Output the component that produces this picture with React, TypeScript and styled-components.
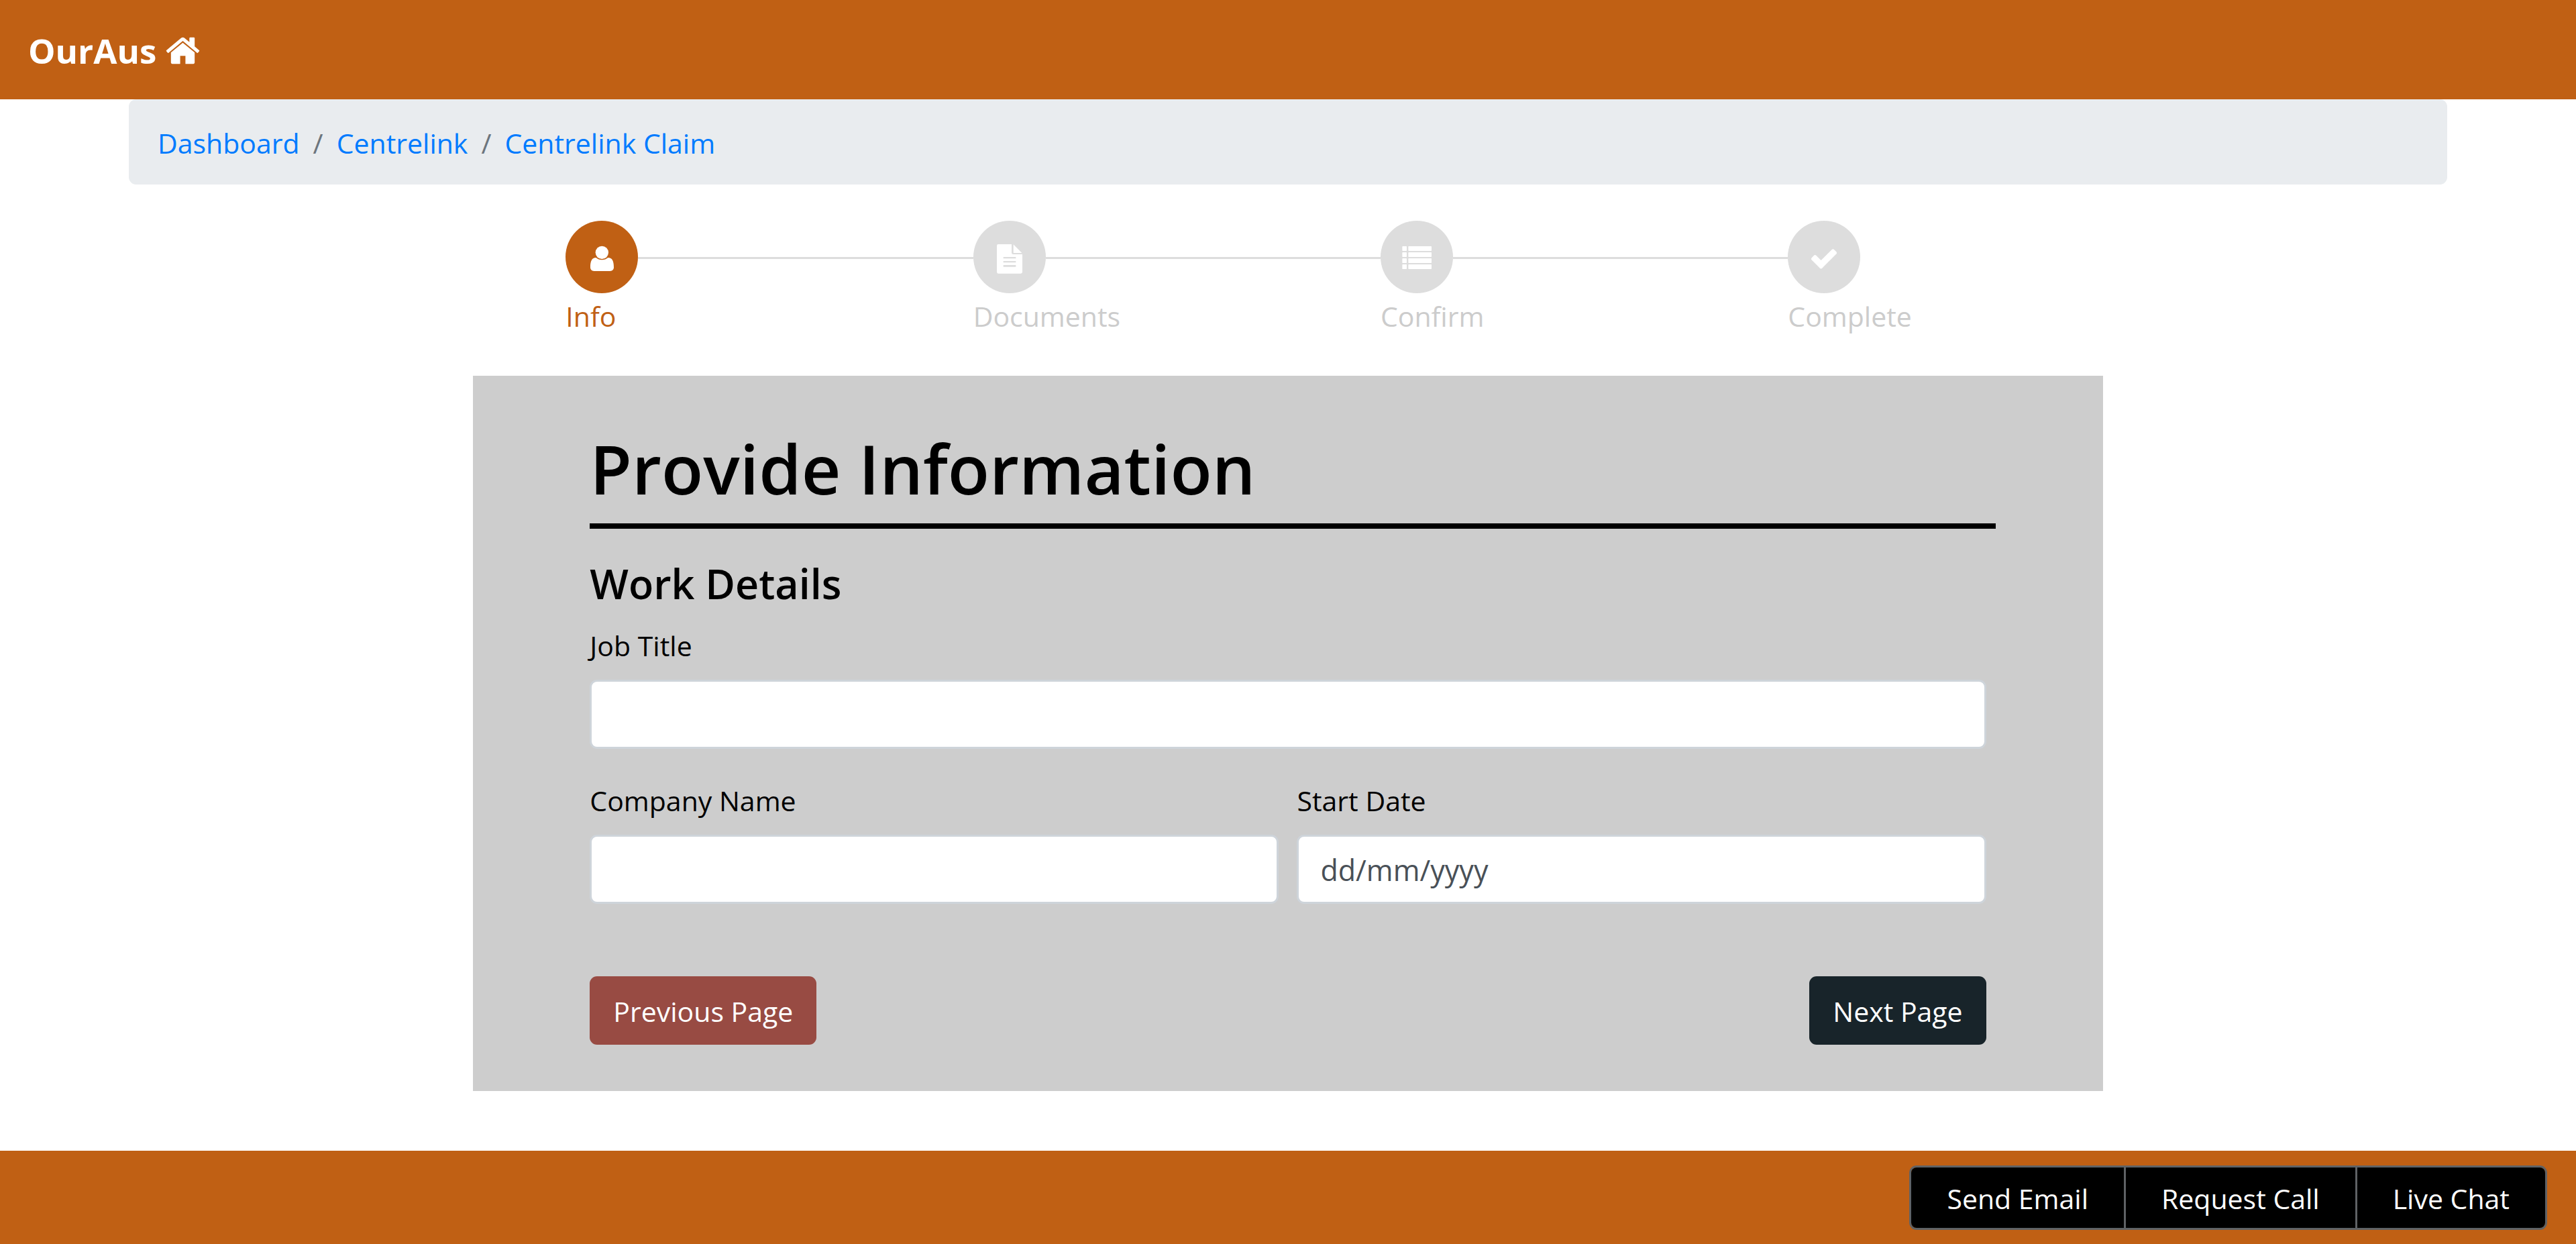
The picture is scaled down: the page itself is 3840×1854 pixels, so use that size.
import React from 'react';
import styled, { createGlobalStyle } from 'styled-components';

const orange = '#c06014';

const GlobalStyle = createGlobalStyle`
  * { box-sizing: border-box; }
  body {
    margin: 0;
    background: #fff;
    color: #000;
    font-family: 'Open Sans', 'Noto Sans', sans-serif;
    font-size: 41px;
    line-height: 64px;
  }
`;

const Page = styled.div`
  display: flex;
  flex-direction: column;
  min-height: 100vh;
`;

const Header = styled.header`
  display: flex;
  align-items: center;
  height: 148px;
  padding: 2px 42px 0;
  background: ${orange};
`;

const Brand = styled.a`
  display: flex;
  align-items: center;
  gap: 12px;
  color: #fff;
  font-size: 51px;
  font-weight: 700;
  text-decoration: none;
`;

const BrandIcon = styled.svg`
  display: block;
  width: 55px;
  height: 55px;
  fill: #fff;
`;

const StepIcon = styled.svg`
  display: block;
  width: 108px;
  height: 108px;
  fill: #fff;
`;

const Breadcrumb = styled.ol`
  display: flex;
  gap: 20px;
  width: 90%;
  margin: 0 auto 54px;
  padding: 33px 43px 30px;
  border-radius: 11px;
  background: #e9ecef;
  list-style: none;
`;

const Crumb = styled.li`
  display: flex;
  gap: 20px;

  & + &::before {
    content: '/';
    color: #6c757d;
  }
`;

const CrumbLink = styled.a`
  color: #007bff;
  text-decoration: none;
`;

const Main = styled.main`
  flex: 1;
  display: grid;
  grid-template-columns: 2fr 8fr 2fr;
  align-content: start;
  padding: 0 98px;

  & > * { grid-column: 2; min-width: 0; }
`;

const Stepper = styled.ol`
  display: grid;
  grid-template-columns: repeat(4, 25%);
  width: 100%;
  margin: 0 0 57px 138px;
  padding: 0;
  list-style: none;
`;

const Step = styled.li<{ $active?: boolean }>`
  color: ${(p) => (p.$active ? orange : '#ccc')};
`;

const StepTrack = styled.div<{ $last?: boolean }>`
  display: flex;
  align-items: center;

  &::after {
    content: '';
    flex: 1;
    height: 3px;
    margin-top: 3px;
    background: ${(p) => (p.$last ? 'transparent' : '#ddd')};
  }
`;

const StepCircle = styled.span<{ $active?: boolean }>`
  width: 108px;
  height: 108px;
  border-radius: 50%;
  background: ${(p) => (p.$active ? orange : '#ddd')};
`;

const StepLabel = styled.span`
  display: block;
  margin-top: 2px;
`;

const Panel = styled.form`
  padding: 74px 174px 69px;
  background: #cdcdcd;
`;

const Title = styled.h1`
  margin: 0;
  font-size: 102px;
  font-weight: 600;
  line-height: 128px;
`;

const Rule = styled.hr`
  height: 8px;
  margin: 18px -14px 42px 0;
  border: 0;
  background: #000;
`;

const Subtitle = styled.h2`
  margin: 0 0 20px;
  font-size: 61px;
  font-weight: 600;
  line-height: 80px;
`;

const Fields = styled.div`
  display: grid;
  grid-template-columns: 1fr 1fr;
  column-gap: 27px;
  row-gap: 45px;
`;

const Field = styled.div<{ $wide?: boolean }>`
  grid-column: ${(p) => (p.$wide ? '1 / -1' : 'auto')};
`;

const Label = styled.label`
  display: block;
  margin-bottom: 19px;
`;

const Input = styled.input`
  display: block;
  width: 100%;
  height: 103px;
  padding: 2px 32px 0;
  border: 3px solid #ced4da;
  border-radius: 11px;
  background: #fff;
  color: #495057;
  font: inherit;
  font-size: 43px;

  &::placeholder { color: #495057; opacity: 1; }
`;

const Actions = styled.div`
  display: flex;
  justify-content: space-between;
  margin-top: 108px;
`;

const ActionButton = styled.button<{ $color: string }>`
  height: 102px;
  padding: 2px 35px 0;
  border: 0;
  border-radius: 11px;
  background: ${(p) => p.$color};
  color: #fff;
  font: inherit;
`;

const Footer = styled.footer`
  display: flex;
  justify-content: flex-end;
  padding: 22px 43px 21px;
  background: ${orange};
`;

const ContactGroup = styled.div`
  display: flex;
  overflow: hidden;
  border: 3px solid #5f6265;
  border-radius: 11px;
`;

const ContactButton = styled.button`
  height: 90px;
  padding: 2px 53px 0;
  border: 0;
  background: #000;
  color: #fff;
  font: inherit;

  & + & { border-left: 3px solid #5f6265; }
`;

const HomeIcon = () => (
  <BrandIcon viewBox="0 0 1792 1792" aria-hidden="true">
    <path d="M1472 992v480q0 26-19 45t-45 19h-384v-384h-256v384h-384q-26 0-45-19t-19-45v-480q0-1 .5-3t.5-3l575-474 575 474q1 2 1 6zm223-69l-62 74q-8 9-21 11h-3q-13 0-21-7l-692-577-692 577q-12 8-24 7-13-2-21-11l-62-74q-8-10-7-23.5t11-21.5l719-599q32-26 76-26t76 26l244 204v-195q0-14 9-23t23-9h192q14 0 23 9t9 23v408l219 182q10 8 11 21.5t-7 23.5z" />
  </BrandIcon>
);

const UserIcon = () => (
  <StepIcon viewBox="0 0 324 324" aria-hidden="true">
    <circle cx="163" cy="142" r="29" />
    <path d="M136 165C118 165 111 180 111 208C111 218 117 225 128 225H199C210 225 216 218 216 208C216 180 209 165 190 165C183 171 173 175 163 175C153 175 143 171 136 165Z" />
  </StepIcon>
);

const FileIcon = () => (
  <StepIcon viewBox="0 0 324 324" aria-hidden="true">
    <path
      fillRule="evenodd"
      d="M111 105H171V143Q171 150 178 150H219V229Q219 236 212 236H111Q105 236 105 229V112Q105 105 111 105ZM134 162V169H190V162ZM134 180V187H190V180ZM134 198V206H190V198Z"
    />
    <path d="M179 106L217 144H179Z" />
  </StepIcon>
);

const ListIcon = () => (
  <StepIcon viewBox="0 0 324 324" aria-hidden="true">
    {[114, 141, 168, 195].map((y) => (
      <g key={y}>
        <rect x="97" y={y} width="20" height="21" rx="2" />
        <rect x="124" y={y} width="104" height="21" rx="2" />
      </g>
    ))}
  </StepIcon>
);

const CheckIcon = () => (
  <StepIcon viewBox="0 0 324 324" aria-hidden="true">
    <path
      transform="translate(96 102) scale(0.0737)"
      d="M1671 566q0 40-28 68l-724 724-136 136q-28 28-68 28t-68-28l-136-136-362-362q-28-28-28-68t28-68l136-136q28-28 68-28t68 28l294 295 656-657q28-28 68-28t68 28l136 136q28 28 28 68z"
    />
  </StepIcon>
);

const steps = [
  { label: 'Info', icon: <UserIcon /> },
  { label: 'Documents', icon: <FileIcon /> },
  { label: 'Confirm', icon: <ListIcon /> },
  { label: 'Complete', icon: <CheckIcon /> },
];

const crumbs = ['Dashboard', 'Centrelink', 'Centrelink Claim'];
const contacts = ['Send Email', 'Request Call', 'Live Chat'];

export default function App() {
  return (
    <Page>
      <GlobalStyle />
      <Header>
        <Brand href="#">
          OurAus <HomeIcon />
        </Brand>
      </Header>
      <Breadcrumb aria-label="Breadcrumb">
        {crumbs.map((c) => (
          <Crumb key={c}>
            <CrumbLink href="#">{c}</CrumbLink>
          </Crumb>
        ))}
      </Breadcrumb>
      <Main>
        <Stepper>
          {steps.map((s, i) => (
            <Step key={s.label} $active={i === 0}>
              <StepTrack $last={i === steps.length - 1}>
                <StepCircle $active={i === 0}>{s.icon}</StepCircle>
              </StepTrack>
              <StepLabel>{s.label}</StepLabel>
            </Step>
          ))}
        </Stepper>
        <Panel onSubmit={(e) => e.preventDefault()}>
          <Title>Provide Information</Title>
          <Rule />
          <Subtitle>Work Details</Subtitle>
          <Fields>
            <Field $wide>
              <Label htmlFor="job">Job Title</Label>
              <Input id="job" type="text" />
            </Field>
            <Field>
              <Label htmlFor="company">Company Name</Label>
              <Input id="company" type="text" />
            </Field>
            <Field>
              <Label htmlFor="start">Start Date</Label>
              <Input id="start" type="text" placeholder="dd/mm/yyyy" />
            </Field>
          </Fields>
          <Actions>
            <ActionButton type="button" $color="#984b43">Previous Page</ActionButton>
            <ActionButton type="submit" $color="#18242a">Next Page</ActionButton>
          </Actions>
        </Panel>
      </Main>
      <Footer>
        <ContactGroup role="group" aria-label="Contact">
          {contacts.map((c) => (
            <ContactButton key={c} type="button">{c}</ContactButton>
          ))}
        </ContactGroup>
      </Footer>
    </Page>
  );
}
